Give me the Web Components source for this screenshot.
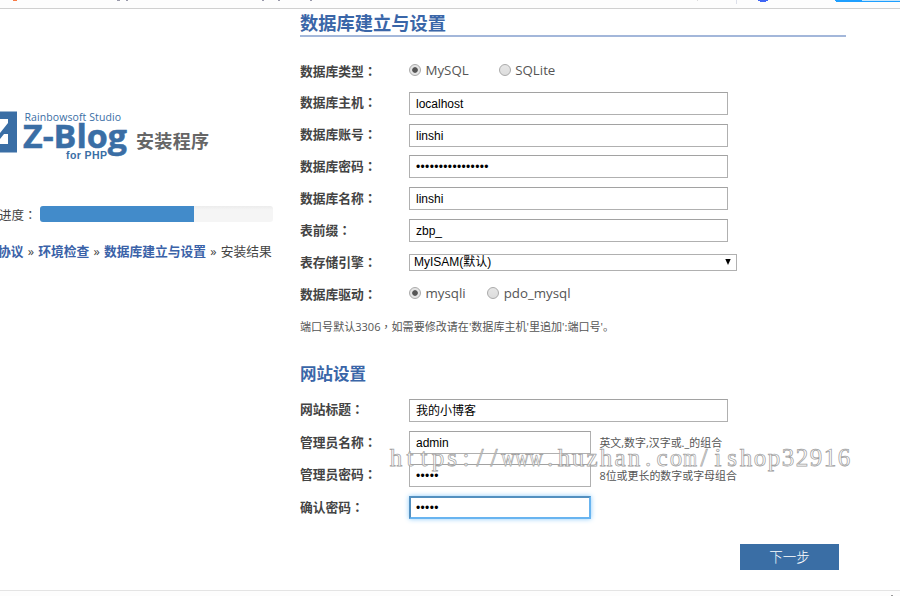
<!DOCTYPE html>
<html lang="zh-CN">
<head>
<meta charset="utf-8">
<title>Z-Blog 安装程序</title>
<style>
    body {
        margin: 0;
        width: 900px;
        height: 596px;
        overflow: hidden;
        background: #fff;
        font-family: "Open Sans", "Noto Sans CJK SC", sans-serif;
        color: #444;
    }
</style>
</head>
<body>
<setup-page></setup-page>

<script>
(function() {

    function define(name, html) {
        const template = document.createElement('template')
        template.innerHTML = html

        window.customElements.define(name, class extends HTMLElement {
            constructor() {
                super()
                this.attachShadow({mode: 'open'})
                this.shadowRoot.appendChild(template.content.cloneNode(true))
            }
        })
    }

    // bottom edge of the browser toolbar
    define('browser-edge', `
        <style>
            :host { display: block; height: 9px; }
            svg { display: block; }
        </style>
        <svg width="900" height="9" shape-rendering="crispEdges">
            <rect width="900" height="8" fill="#fdfdfd"/>
            <rect y="8" width="900" height="1" fill="#d0d0d0"/>
            <rect x="13" width="4" height="1" fill="#f97a45"/>
            <path d="M117 0h3v1h-3zM126 0h2v1h-2zM262 0h2v1h-2zM278 0h2v1h-2zM310 0h2v1h-2z" fill="#9a9aab"/>
            <rect x="697" width="1" height="1" fill="#ddd"/>
            <rect x="736" width="1" height="4" fill="#dde0ea"/>
            <path d="M758 0h10v1h-2v1h-6v-1h-2z" fill="#3f66f5"/>
            <path d="M835 0h65v2h-64v-1h-1z" fill="#1e9fff"/>
            <rect x="862" width="38" height="1" fill="#c5e6fc"/>
        </svg>
    `)

    define('zblog-logo', `
        <style>
            :host { display: flex; height: 52px; }
            svg { display: block; overflow: visible; }
            text { fill: #3a6ea5; }
            .name { font: bold 31.5px "Open Sans", sans-serif; stroke: #3a6ea5; stroke-width: .5px; }
            .studio { font: 10.5px "Open Sans", sans-serif; }
            .php { font: bold 10.5px "Liberation Sans", sans-serif; }
            .title { font: bold 18px "Noto Sans CJK SC", sans-serif; fill: #666; }
        </style>
        <svg width="212" height="52">
            <rect y="2.5" width="17" height="41" fill="#3a6ea5"/>
            <path d="M0 10H8V14L0 24ZM0 30L4 25H8V35H0Z" fill="#fff"/>
            <text class="studio" x="24.5" y="11.5" textLength="96.5">Rainbowsoft Studio</text>
            <text class="name" x="23" y="39" textLength="104" lengthAdjust="spacingAndGlyphs">Z-Blog</text>
            <text class="php" x="66" y="49.5" textLength="41">for PHP</text>
            <text class="title" x="136" y="39" textLength="73">安装程序</text>
        </svg>
    `)

    define('setup-progress', `
        <style>
            :host { display: flex; align-items: center; height: 20px; font-size: 12.5px; }
            .label { width: 40px; margin-left: -1px; white-space: nowrap; margin-right: 1px; }
            .colon { font-family: "Noto Sans CJK TC", sans-serif; }
            .track {
                width: 233px;
                height: 16px;
                border-radius: 3px;
                overflow: hidden;
                background: linear-gradient(#ececec, #f5f5f5 25%);
            }
            .bar { width: 154px; height: 100%; background: #428bca; }
        </style>
        <span class="label"><slot></slot><span class="colon" lang="zh-TW">：</span></span>
        <div class="track"><div class="bar"></div></div>
    `)

    define('setup-steps', `
        <style>
            :host {
                display: block;
                height: 20px;
                line-height: 20px;
                font-size: 12.75px;
                word-spacing: .9px;
                white-space: nowrap;
            }
            ::slotted(b) { color: #3a62a8; }
        </style>
        <slot></slot>
    `)

    define('section-title', `
        <style>
            :host { display: block; color: #3a66a8; font-weight: bold; line-height: 26px; white-space: nowrap; }
            :host([main]) { line-height: 28px; height: 26px; border-bottom: 2px solid #a3b7da; }
        </style>
        <slot></slot>
    `)

    define('form-row', `
        <style>
            :host { display: flex; align-items: center; height: 31.86px; }
            .label {
                width: 109px;
                font-size: 12.75px;
                font-weight: bold;
                line-height: 20px;
                margin-top: -1.4px;
                white-space: nowrap;
            }
            .colon { font-family: "Noto Sans CJK TC", sans-serif; }
            .field { display: flex; align-items: center; }
        </style>
        <span class="label"><slot name="label"></slot><span class="colon" lang="zh-TW">：</span></span>
        <div class="field"><slot></slot></div>
    `)

    define('text-box', `
        <style>
            :host {
                display: block;
                box-sizing: border-box;
                width: 319px;
                height: 23px;
                border: 1px solid #b0b0b0;
                border-top-color: #a2a2a2;
                padding-left: 6px;
                background: #fff;
                color: #000;
                font: 12px/22px "Liberation Sans", "Noto Sans CJK SC", sans-serif;
                white-space: nowrap;
            }
            :host([small]) { width: 182.4px; }
            :host([secret]) { letter-spacing: .35px; }
            :host([focused]) {
                border: 2px solid #68b4f0;
                border-top-color: #5390c0;
                border-left-color: #5390c0;
                padding-left: 5px;
                line-height: 20px;
                box-shadow: 0 0 5px #8ccbfa;
            }
        </style>
        <slot></slot>
    `)

    define('select-box', `
        <style>
            :host {
                display: flex;
                box-sizing: border-box;
                justify-content: space-between;
                align-items: center;
                width: 328px;
                height: 17px;
                border: 1px solid #b0b0b0;
                padding: 0 5px 0 4px;
                color: #000;
                font: 12px/15px "Liberation Sans", "Noto Sans CJK SC", sans-serif;
            }
        </style>
        <span><slot></slot></span>
        <svg width="6" height="6"><path d="M.3 0h5.4L3 6z"/></svg>
    `)

    define('radio-option', `
        <style>
            :host { display: flex; align-items: center; font-size: 13.3px; color: #555; line-height: 20px; margin-top: -2px; }
            .dot {
                box-sizing: border-box;
                width: 12px;
                height: 12px;
                margin: -1px 4.5px 0 0;
                border: 1px solid #aaa;
                border-radius: 50%;
                background: linear-gradient(#e6e6e6, #ddd);
            }
            :host([checked]) .dot { background: radial-gradient(#555 0 2.4px, #e4e4e4 3.2px); }
        </style>
        <span class="dot"></span><slot></slot>
    `)

    define('next-button', `
        <style>
            :host {
                display: block;
                box-sizing: border-box;
                width: 99px;
                height: 26px;
                background: #3a6ea5;
                color: #fff;
                font: 300 13.5px/24px "Noto Sans CJK SC", sans-serif;
                text-align: center;
            }
        </style>
        <slot></slot>
    `)

    // outlined text in 14px cells; the wide www is squeezed to fit its three
    window.customElements.define('site-watermark', class extends HTMLElement {
        constructor() {
            super()
            const cells = (text, start) =>
                `<tspan x="${Array.from(text, (c, i) => 7 + (start + i) * 14).join(' ')}">${text}</tspan>`
            this.attachShadow({mode: 'open'}).innerHTML = `
                <style>
                    :host { display: block; position: absolute; left: 389px; top: 440px; }
                    text {
                        font: 25px "Liberation Serif", serif;
                        text-anchor: middle;
                        fill: #fff;
                        fill-opacity: .7;
                        stroke: #a2a2a2;
                        stroke-width: .75px;
                    }
                    .wide { text-anchor: start; }
                </style>
                <svg width="465" height="36"><text y="26">${cells('https://', 0)}<tspan class="wide" x="112" textLength="42" lengthAdjust="spacingAndGlyphs">www</tspan>${cells('.huzhan.co', 11)}<tspan class="wide" x="294" textLength="14" lengthAdjust="spacingAndGlyphs">m</tspan>${cells('/ishop32916', 22)}</text></svg>
            `
        }
    })

    define('setup-page', `
        <style>
            :host { display: block; width: 900px; height: 596px; }
            .content { display: flex; height: 581px; }
            .side { width: 300px; padding-top: 100px; box-sizing: border-box; }
            setup-progress { margin-top: 43px; }
            setup-steps { margin: 17px 0 0 -2px; }
            .form { width: 546px; }
            .first { font-size: 18.25px; }
            .db { margin-top: 18.4px; }
            .second { font-size: 16.5px; margin-top: 17.6px; }
            .site { margin-top: 7px; }
            .site form-row { height: 32.5px; }
            .hint { font-size: 10.95px; color: #555; white-space: nowrap; }
            .db .hint { line-height: 32px; font-size: 11.05px; }
            .comma { font-family: "Noto Sans CJK TC", sans-serif; }
            .side-note { margin: -1px 0 0 8px; }
            .gap { margin-left: 30px; }
            .gap2 { margin-left: 21.5px; }
            next-button { margin: 20.4px 0 0 440px; }
            .foot { display: flex; justify-content: flex-end; align-items: flex-end; border-top: 1px solid #e4e4e4; background: #fdfdfd; height: 5px; }
            .foot i { width: 2px; height: 1px; margin-right: 7px; background: #999; }
        </style>
        <browser-edge></browser-edge>
        <div class="content">
            <div class="side">
                <zblog-logo></zblog-logo>
                <setup-progress>进度</setup-progress>
                <setup-steps><b>协议</b> » <b>环境检查</b> » <b>数据库建立与设置</b> » 安装结果</setup-steps>
            </div>
            <div class="form">
                <section-title main class="first">数据库建立与设置</section-title>
                <div class="db">
                    <form-row><span slot="label">数据库类型</span><radio-option checked>MySQL</radio-option><radio-option class="gap">SQLite</radio-option></form-row>
                    <form-row><span slot="label">数据库主机</span><text-box>localhost</text-box></form-row>
                    <form-row><span slot="label">数据库账号</span><text-box>linshi</text-box></form-row>
                    <form-row><span slot="label">数据库密码</span><text-box secret>••••••••••••••••</text-box></form-row>
                    <form-row><span slot="label">数据库名称</span><text-box>linshi</text-box></form-row>
                    <form-row><span slot="label">表前缀</span><text-box>zbp_</text-box></form-row>
                    <form-row><span slot="label">表存储引擎</span><select-box>MyISAM(默认)</select-box></form-row>
                    <form-row><span slot="label">数据库驱动</span><radio-option checked>mysqli</radio-option><radio-option class="gap2">pdo_mysql</radio-option></form-row>
                    <div class="hint">端口号默认3306<span class="comma" lang="zh-TW">，</span>如需要修改请在'数据库主机'里追加':端口号'。</div>
                </div>
                <section-title class="second">网站设置</section-title>
                <div class="site">
                    <form-row><span slot="label">网站标题</span><text-box>我的小博客</text-box></form-row>
                    <form-row><span slot="label">管理员名称</span><text-box small>admin</text-box><span class="hint side-note">英文,数字,汉字或._的组合</span></form-row>
                    <form-row><span slot="label">管理员密码</span><text-box small secret>•••••</text-box><span class="hint side-note">8位或更长的数字或字母组合</span></form-row>
                    <form-row><span slot="label">确认密码</span><text-box small secret focused>•••••</text-box></form-row>
                </div>
                <next-button>下一步</next-button>
            </div>
        </div>
        <div class="foot"><i></i></div>
        <site-watermark></site-watermark>
    `)
}())
</script>
</body>
</html>
